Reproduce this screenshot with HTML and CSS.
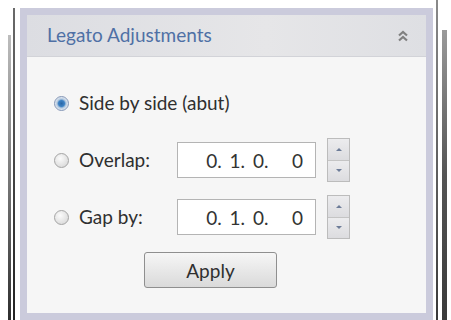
FILE: index.html
```html
<!DOCTYPE html>
<html lang="en">
<head>
    <meta charset="UTF-8">
    <title>Legato Adjustments</title>
    <link rel="stylesheet" href="styles.css">
</head>
<body>
    <div class="screen">
        <!-- sol kenar cizgileri -->
        <div class="edge edge-left">
            <span class="rail rail-soft"></span>
            <span class="rail rail-dark"></span>
        </div>

        <section class="panel">
            <header class="panel-head">
                <span class="title">Legato Adjustments</span>
                <svg class="collapse" width="12" height="14" viewBox="0 0 12 14">
                    <path d="M2 6.5 L6 3 L10 6.5 M2 11.5 L6 8 L10 11.5" fill="none" stroke="#808080" stroke-width="2.2"/>
                </svg>
            </header>

            <div class="panel-body">
                <div class="row row-first">
                    <span class="radio checked"></span>
                    <span class="label">Side by side (abut)</span>
                </div>

                <div class="row">
                    <div class="choice">
                        <span class="radio"></span>
                        <span class="label">Overlap:</span>
                    </div>
                    <input class="amount" type="text" value="0. 1. 0.   0">
                    <div class="spinner">
                        <span class="spin up"></span>
                        <span class="spin down"></span>
                    </div>
                </div>

                <div class="row">
                    <div class="choice">
                        <span class="radio"></span>
                        <span class="label">Gap by:</span>
                    </div>
                    <input class="amount" type="text" value="0. 1. 0.   0">
                    <div class="spinner">
                        <span class="spin up"></span>
                        <span class="spin down"></span>
                    </div>
                </div>

                <button class="apply">Apply</button>
            </div>
        </section>

        <!-- sag kenar cizgileri -->
        <div class="edge edge-right">
            <span class="rail rail-thin"></span>
            <span class="rail rail-wide"></span>
        </div>
    </div>
</body>
</html>
```

FILE: styles.css
```css
/* Genel sayfa */
body {
    margin: 0;
    background: #ffffff;
    font-family: Lato, "Noto Sans", sans-serif;
    color: #333;
}

.screen {
    display: flex;
    height: 320px;
    overflow: hidden;
}

/* Kenar cizgileri */
.edge {
    display: flex;
}

.edge-left {
    width: 20px;
}

.rail {
    display: block;
}

.rail-soft {
    width: 3px;
    margin: 35px 0 0 8px;
    background: linear-gradient(#bdbdbd, #6a6a6a 60%, #2e2e2e);
}

.rail-dark {
    width: 2px;
    margin: 8px 0 0 2px;
    background: linear-gradient(#6a6a6a, #222);
}

.edge-right {
    width: 18px;
}

.rail-thin {
    width: 2px;
    margin-left: 3px;
    background: linear-gradient(#8a8a8a, #3a3a3a);
}

.rail-wide {
    width: 5px;
    margin: 30px 0 0 4px;
    background: linear-gradient(#9a9a9a, #555 50%, #3a3a3a);
}

/* Panel */
.panel {
    width: 413px;
    height: 312px;
    margin-top: 8px;
    box-sizing: border-box;
    border: 7px solid #cbcbdc;
    display: flex;
    flex-direction: column;
}

.panel-head {
    height: 41px;
    display: flex;
    align-items: center;
    justify-content: space-between;
    padding: 0 17px 0 20px;
    background: linear-gradient(90deg, #dcdde2, #e6e6e8 60%, #dedfe3);
    border-bottom: 1px solid #d2d3d8;
}

.title {
    font-size: 19px;
    color: #4f70a5;
    margin-top: -2px;
}

.panel-body {
    flex: 1;
    background: #f6f6f6;
    padding: 35px 0 0 27px;
}

/* Satirlar */
.row {
    display: flex;
    align-items: center;
    height: 44px;
    margin-bottom: 13px;
}

.row-first {
    height: 22px;
    margin-bottom: 24px;
}

.choice {
    width: 123px;
    display: flex;
    align-items: center;
}

.radio {
    width: 15px;
    height: 15px;
    border-radius: 50%;
    box-sizing: border-box;
    border: 1px solid #a4a4a4;
    background: radial-gradient(circle at 40% 35%, #fbfbfb, #d2d2d2);
    margin-right: 10px;
}

.radio.checked {
    border-color: #8496b6;
    background: radial-gradient(circle, #2a66a6 0, #3d82c4 3px, #b4c9df 4.5px, #eef2f7 7px);
}

.label {
    font-size: 19px;
    color: #2f2f2f;
    margin-top: -2px;
}

/* Sayi kutusu */
.amount {
    width: 139px;
    height: 36px;
    box-sizing: border-box;
    border: 1px solid #b4b4b4;
    background: #fff;
    padding: 0 12px 0 4px;
    text-align: right;
    font-family: Lato, "Noto Sans", sans-serif;
    font-size: 19px;
    word-spacing: 3px;
    color: #333;
    white-space: pre;
}

.spinner {
    width: 23px;
    height: 44px;
    margin-left: 11px;
    display: flex;
    flex-direction: column;
    box-sizing: border-box;
    border: 1px solid #bcbcbc;
}

.spin {
    flex: 1;
    display: flex;
    align-items: center;
    justify-content: center;
    background: linear-gradient(#ececee, #dcdcdf);
}

.spin.up {
    border-bottom: 1px solid #c4c4c4;
}

.spin::after {
    content: "";
    border-left: 3px solid transparent;
    border-right: 3px solid transparent;
}

.spin.up::after {
    border-bottom: 3px solid #6d7c98;
}

.spin.down::after {
    border-top: 3px solid #6d7c98;
}

/* Uygula dugmesi */
.apply {
    display: block;
    width: 133px;
    height: 36px;
    margin: 6px 0 0 90px;
    border: 1px solid #8f8f8f;
    border-radius: 3px;
    background: linear-gradient(#f6f6f6, #e8e8e8 50%, #dadada);
    font-family: Lato, "Noto Sans", sans-serif;
    font-size: 19px;
    color: #2f2f2f;
}
```
